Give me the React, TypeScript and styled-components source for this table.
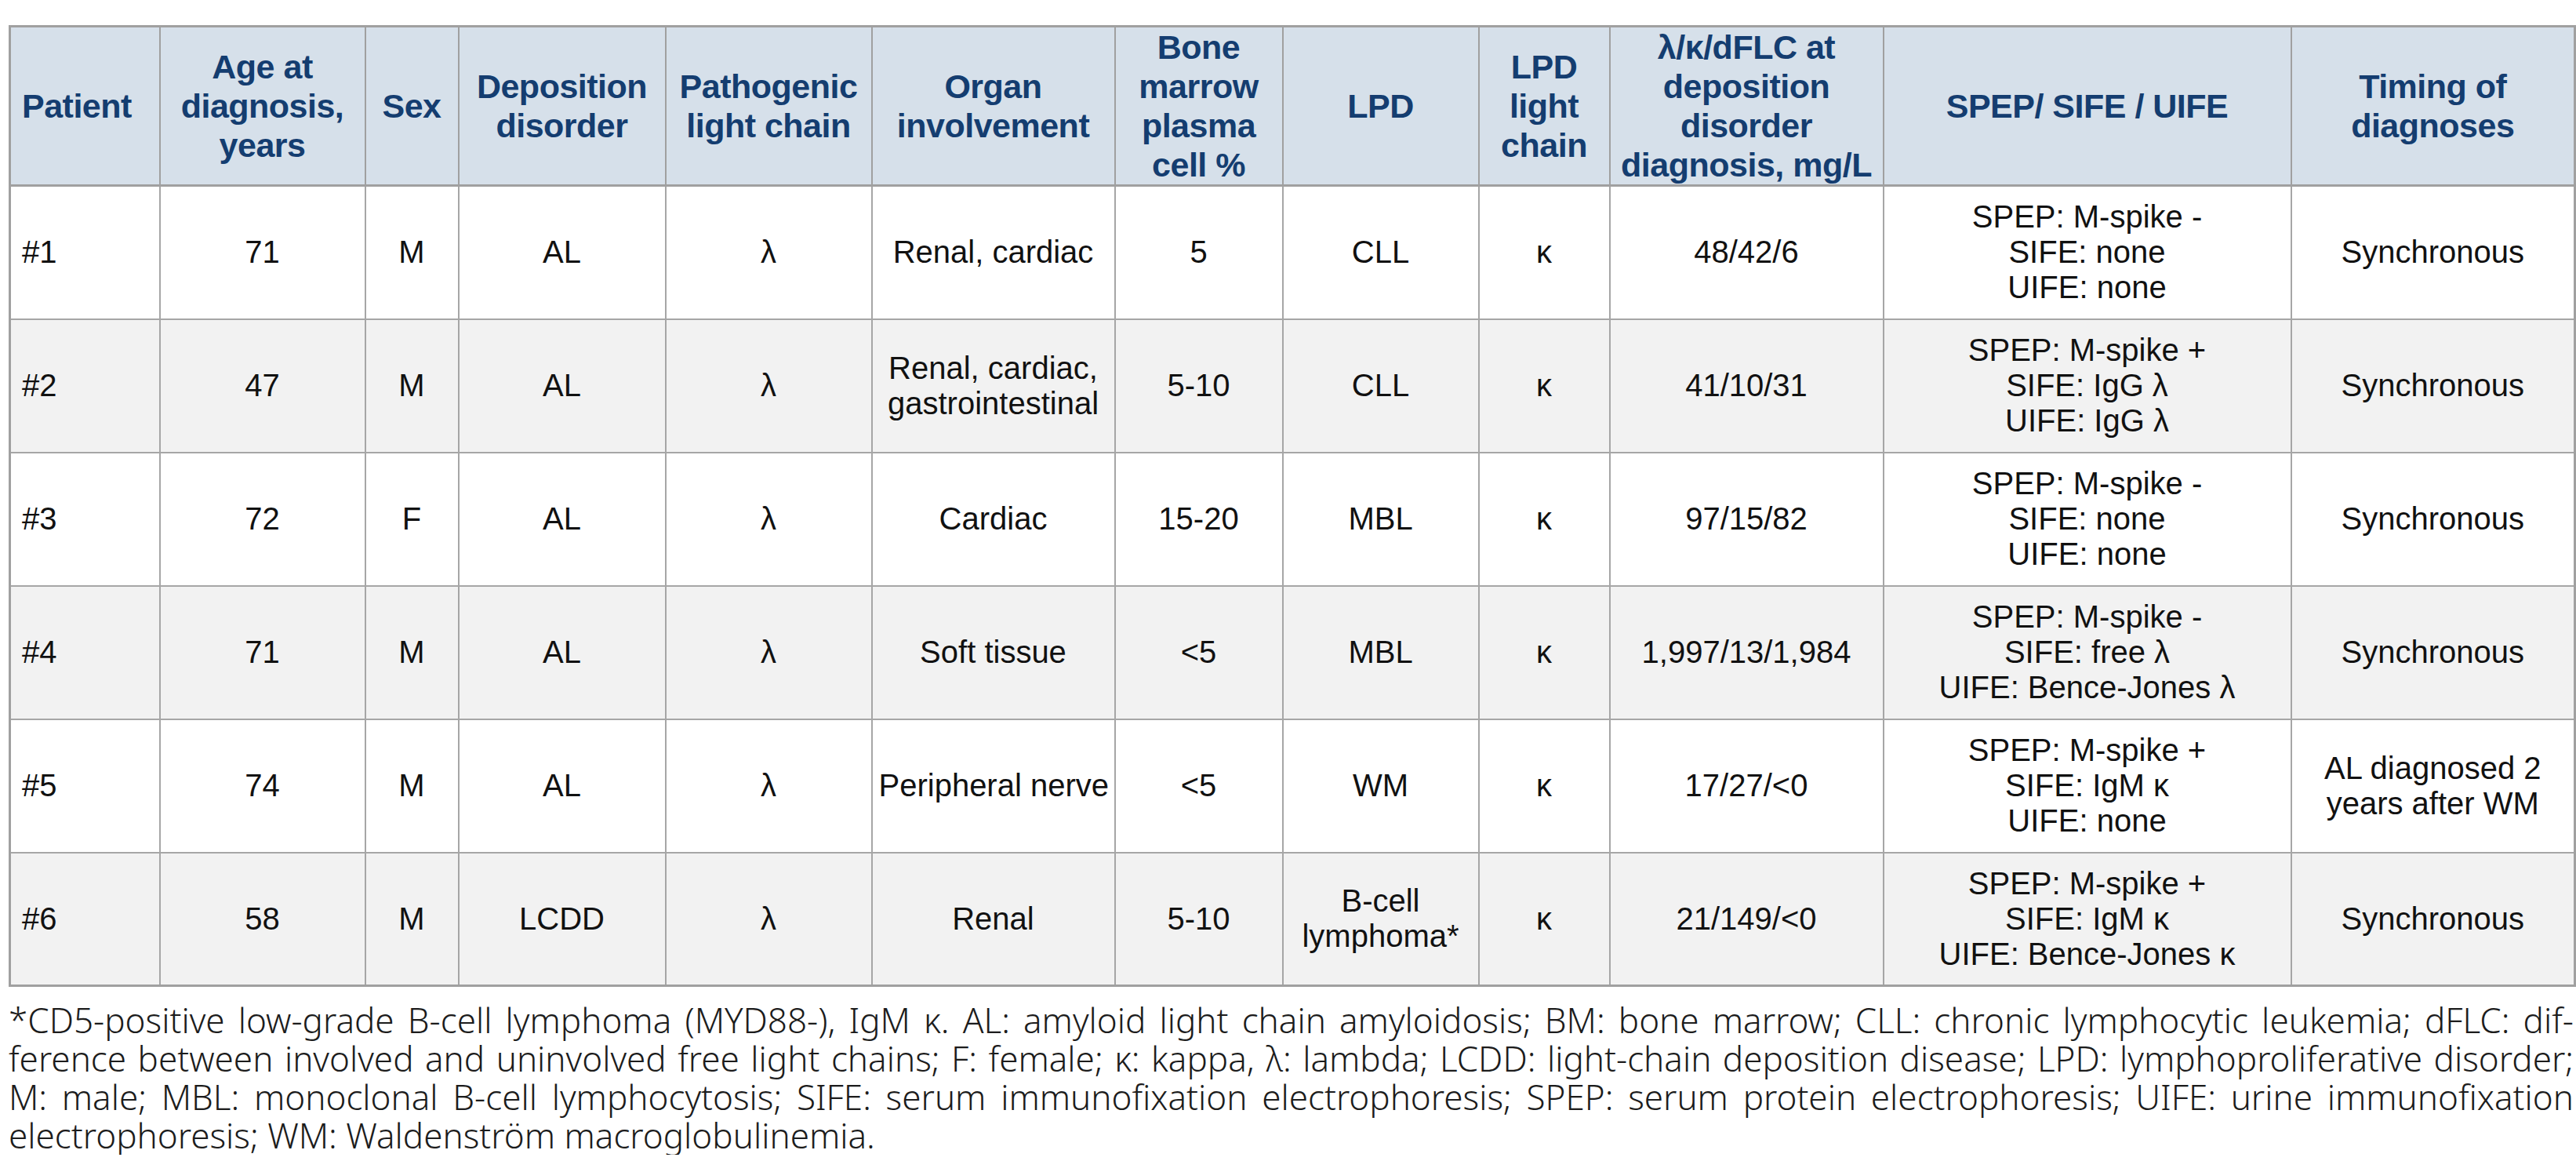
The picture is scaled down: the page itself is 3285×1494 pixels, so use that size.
import React from 'react'
import styled, { createGlobalStyle } from 'styled-components'

const GlobalStyle = createGlobalStyle`
  html, body {
    margin: 0;
    padding: 0;
    background: #ffffff;
  }
`

const Page = styled.div`
  width: 3285px;
  padding: 32px 0 0 11px;
  box-sizing: border-box;
`

const Table = styled.table`
  width: 3271px;
  table-layout: fixed;
  border-collapse: collapse;
  border: 3px solid #a0a0a0;
  font-family: 'Liberation Sans', Arial, sans-serif;
`

const HeadRow = styled.tr`
  height: 201px;
  background: #d6e0ea;
`

const HeadCell = styled.th<{ $left?: boolean }>`
  border: 2px solid #a0a0a0;
  border-bottom-width: 3px;
  padding: 0 8px;
  font-size: 43px;
  line-height: 50px;
  font-weight: 700;
  color: #143d70;
  text-align: ${(p) => (p.$left ? 'left' : 'center')};
  padding-left: ${(p) => (p.$left ? '14px' : '8px')};
  vertical-align: middle;
  letter-spacing: -0.5px;
`

const BodyRow = styled.tr<{ $shade: boolean }>`
  height: 170px;
  background: ${(p) => (p.$shade ? '#f2f2f2' : '#ffffff')};
`

const Cell = styled.td<{ $left?: boolean }>`
  border: 2px solid #a6a6a6;
  padding: 0 8px;
  font-size: 40px;
  line-height: 45px;
  color: #111111;
  text-align: ${(p) => (p.$left ? 'left' : 'center')};
  padding-left: ${(p) => (p.$left ? '14px' : '8px')};
  vertical-align: middle;
`

const Line = styled.span`
  display: block;
  white-space: nowrap;
`

const Notes = styled.div`
  width: 3271px;
  margin-top: 18px;
  font-family: 'Noto Sans', 'Open Sans', sans-serif;
  font-weight: 300;
  font-size: 44px;
  line-height: 49px;
  color: #1c1c1c;
`

const NoteLine = styled.div<{ $last?: boolean }>`
  text-align: ${(p) => (p.$last ? 'left' : 'justify')};
  text-align-last: ${(p) => (p.$last ? 'left' : 'justify')};
`

const widths = [191, 262, 119, 264, 263, 310, 214, 250, 167, 349, 520, 362]

const headers: string[][] = [
  ['Patient'],
  ['Age at', 'diagnosis,', 'years'],
  ['Sex'],
  ['Deposition', 'disorder'],
  ['Pathogenic', 'light chain'],
  ['Organ', 'involvement'],
  ['Bone', 'marrow', 'plasma', 'cell %'],
  ['LPD'],
  ['LPD', 'light', 'chain'],
  ['λ/κ/dFLC at', 'deposition', 'disorder', 'diagnosis, mg/L'],
  ['SPEP/ SIFE / UIFE'],
  ['Timing of', 'diagnoses'],
]

type Value = string | string[]

const rows: Value[][] = [
  ['#1', '71', 'M', 'AL', 'λ', 'Renal, cardiac', '5', 'CLL', 'κ', '48/42/6',
    ['SPEP: M-spike -', 'SIFE: none', 'UIFE: none'], 'Synchronous'],
  ['#2', '47', 'M', 'AL', 'λ', ['Renal, cardiac,', 'gastrointestinal'], '5-10', 'CLL', 'κ', '41/10/31',
    ['SPEP: M-spike +', 'SIFE: IgG λ', 'UIFE: IgG λ'], 'Synchronous'],
  ['#3', '72', 'F', 'AL', 'λ', 'Cardiac', '15-20', 'MBL', 'κ', '97/15/82',
    ['SPEP: M-spike -', 'SIFE: none', 'UIFE: none'], 'Synchronous'],
  ['#4', '71', 'M', 'AL', 'λ', 'Soft tissue', '<5', 'MBL', 'κ', '1,997/13/1,984',
    ['SPEP: M-spike -', 'SIFE: free λ', 'UIFE: Bence-Jones λ'], 'Synchronous'],
  ['#5', '74', 'M', 'AL', 'λ', 'Peripheral nerve', '<5', 'WM', 'κ', '17/27/<0',
    ['SPEP: M-spike +', 'SIFE: IgM κ', 'UIFE: none'], ['AL diagnosed 2', 'years after WM']],
  ['#6', '58', 'M', 'LCDD', 'λ', 'Renal', '5-10', ['B-cell', 'lymphoma*'], 'κ', '21/149/<0',
    ['SPEP: M-spike +', 'SIFE: IgM κ', 'UIFE: Bence-Jones κ'], 'Synchronous'],
]

const notes = [
  '*CD5-positive low-grade B-cell lymphoma (MYD88-), IgM κ. AL: amyloid light chain amyloidosis; BM: bone marrow; CLL: chronic lymphocytic leukemia; dFLC: dif-',
  'ference between involved and uninvolved free light chains; F: female; κ: kappa, λ: lambda; LCDD: light-chain deposition disease; LPD: lymphoproliferative disorder;',
  'M: male; MBL: monoclonal B-cell lymphocytosis; SIFE: serum immunofixation electrophoresis; SPEP: serum protein electrophoresis; UIFE: urine immunofixation',
  'electrophoresis; WM: Waldenström macroglobulinemia.',
]

const renderLines = (v: Value) =>
  (Array.isArray(v) ? v : [v]).map((text) => <Line key={text}>{text}</Line>)

export default function App() {
  return (
    <>
      <GlobalStyle />
      <Page>
        <Table>
          <colgroup>
            {widths.map((w, i) => (
              <col key={i} style={{ width: w }} />
            ))}
          </colgroup>
          <thead>
            <HeadRow>
              {headers.map((h, i) => (
                <HeadCell key={i} $left={i === 0}>
                  {renderLines(h)}
                </HeadCell>
              ))}
            </HeadRow>
          </thead>
          <tbody>
            {rows.map((row, r) => (
              <BodyRow key={r} $shade={r % 2 === 1}>
                {row.map((v, i) => (
                  <Cell key={i} $left={i === 0}>
                    {renderLines(v)}
                  </Cell>
                ))}
              </BodyRow>
            ))}
          </tbody>
        </Table>
        <Notes>
          {notes.map((n, i) => (
            <NoteLine key={i} $last={i === notes.length - 1}>
              {n}
            </NoteLine>
          ))}
        </Notes>
      </Page>
    </>
  )
}
